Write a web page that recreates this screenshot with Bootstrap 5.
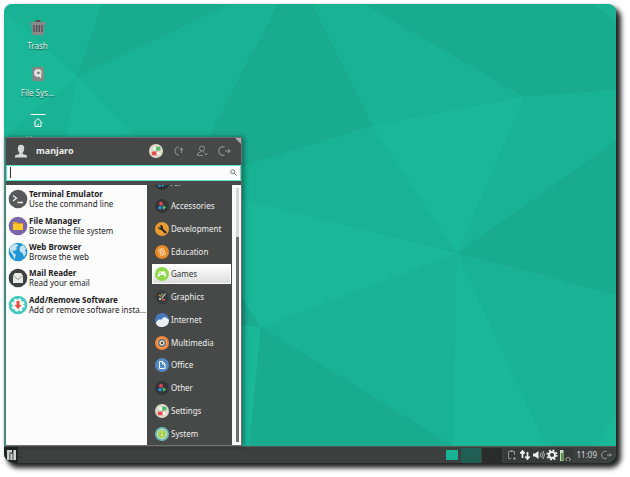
<!DOCTYPE html>
<html lang="en">
<head>
<meta charset="utf-8">
<meta name="viewport" content="width=device-width, initial-scale=1">
<title>Desktop</title>
<link href="https://cdn.jsdelivr.net/npm/bootstrap@5.3.0/dist/css/bootstrap.min.css" rel="stylesheet">
<style>
body{font-family:"Noto Sans","Open Sans",sans-serif;font-size:8px;line-height:10px;background:#fff;padding:4px 14px 14px 4px}
button{font:inherit;color:inherit;background:none;border:0;padding:0}
svg{display:block;flex:none}
.screen{border-radius:10px;box-shadow:4px 4px 5px 1px #222;background:#19b294}
.wallpaper{inset:0;width:100%;height:100%}
.shortcuts{width:67px;padding-top:15px;gap:15px}
.shortcut{height:32px;gap:6px;color:#e4efec;text-shadow:0 1px 1px #174d42}
.start-menu{left:1px;bottom:0;width:237px;height:309px;background:#464947;border:1px solid #6c716e;box-shadow:2px 0 5px #0006;color:#eee;z-index:2}
.corner{right:0;top:0;width:6px;height:6px;background:#aaa;clip-path:polygon(0 0,100% 0,100% 100%)}
.menu-head{height:28px;padding:0 9px 0 8px;font-size:9px}
.user-name{margin-left:8px}
.head-actions{gap:9px;color:#8e918f}
.search-box{height:17px;margin:0 0 4px;border:1px solid #58e8c9;background:#fcfcfc;padding:0 3px}
.search-box input{font:inherit;height:11px;border:0;border-left:1px solid #333;outline:0;background:none;min-width:0;padding:0 2px}
.favs{width:141px;background:#fcfcfc;color:#222}
.favs ul{height:133px;padding-top:1px}
.favs button{padding-left:2px;gap:1px;white-space:nowrap}
.cats ul{height:273px;padding:0 1px 0 5px}
.cats button{height:20px;padding-left:2px;gap:2px;border:1px solid transparent}
.cats button.picked{background:linear-gradient(#fff,#ddd);color:#333;border-color:#fff}
.scroll-track{width:9px;background:#f8f9f8;padding:3px 2px 3px 4px}
.scroll-rail{background:#d5d8d6}
.scroll-grip{background:#6b706d;height:205px}
.task-panel{height:17px;background:#3c403f;border-top:1px solid #555a58;border-radius:0 0 10px 10px;color:#d5d8d6}
.launcher{width:14px;background:#202423}
.handle-dots{color:#222;margin-left:1px}
.task-preview{width:12px;height:10px;background:#1ab295;margin-right:3px}
.desk-cell{width:20px;height:15px;background:#205f54;margin-right:1px}
.desk-cell.other{background:#292c2b}
.tray{height:15px;width:69px;background:#363a39;margin-left:1px;padding-left:2px;gap:1px}
.clock{margin:0 4px 0 4px}
.exit-btn{margin-right:3px;color:#999d9b}
</style>
<script src="https://cdn.jsdelivr.net/npm/bootstrap@5.3.0/dist/js/bootstrap.bundle.min.js"></script>
</head>
<body class="vh-100 d-flex">
<svg width="0" height="0" class="position-absolute" aria-hidden="true">
<defs>
<symbol id="moon-exit" viewBox="0 0 12 12"><path d="M5.500 2.500A3.700 3.700 0 1 0 5.500 9.500M6 6h4.500M8.500 4.500 10.200 6 8.500 7.500" fill="none" stroke="currentColor"/></symbol>
<symbol id="toggles" viewBox="0 0 14 14"><circle cx="7" cy="7" r="7" fill="#dfdccb"/><rect x="3.500" y="2.800" width="8" height="3.600" rx="1" fill="#4fba6b"/><rect x="3.500" y="2.800" width="3.600" height="3.600" rx="1" fill="#f4f4ef"/><rect x="2.800" y="7.600" width="8" height="3.600" rx="1" fill="#e84b4b"/><rect x="7.500" y="7.600" width="3.400" height="3.600" rx="1" fill="#f4f4ef"/></symbol>
<symbol id="blobs" viewBox="0 0 14 14"><circle cx="7" cy="7" r="7" fill="#333536"/><circle cx="6" cy="4.700" r="1.900" fill="#e4455a"/><circle cx="5" cy="8.800" r="1.800" fill="#2f8fe0"/><path d="m7.500 6 3.800 2.400-3.300 2.400z" fill="#3fc474"/></symbol>
</defs>
</svg>
<main class="screen flex-grow-1 d-flex flex-column overflow-visible">
  <section class="flex-grow-1 position-relative">
    <svg class="wallpaper position-absolute rounded-top-3" viewBox="4 4 612 443" preserveAspectRatio="none" aria-hidden="true">
      <path fill="#19b294" d="M4 4h612v443H4z"/>
      <g fill="#1ab899"><path d="M4 10 77 77 4 135z"/><path d="M77 77 66 140 20 400 243 300V201L136 138z"/><path d="M372 126 524 97 457 254z"/><path d="M457 254 236 199V338L261 328z"/><path d="M457 254 453 447H546z"/><path d="M616 412 597 447h19z"/><path d="M261 328 249 447H236V340z"/></g>
      <g fill="#19ab8e"><path d="M102 4H230L77 77z"/><path d="M278 4h34l60 122-129 40-60 20z"/><path d="M364 4H593L616 22V90L524 97z"/><path d="M457 254 616 141V295z"/><path d="M261 328 453 447H249z"/><path d="M261 328 236 290V325z"/></g>
    </svg>
    <div class="shortcuts position-relative d-flex flex-column">
      <button class="shortcut d-flex flex-column align-items-center">
        <svg width="16" height="16" viewBox="0 0 16 16"><path d="M5.500 1h5v2h-5z" fill="#555"/><path d="M.5 3h15v2.500h-1L13.700 16H2.300L1.500 5.500h-1z" fill="#8a8a8a"/><path d="M4 6v7M6.700 6v7M9.300 6v7M12 6v7" stroke="#4d4d4d" stroke-width="1.300"/></svg>
        <span>Trash</span></button>
      <button class="shortcut d-flex flex-column align-items-center">
        <svg width="16" height="16" viewBox="0 0 16 16"><rect x="2.500" y="1" width="11.500" height="14" rx="1" fill="#858585"/><circle cx="8" cy="7" r="4" fill="#dedede"/><circle cx="8.500" cy="7" r="1.300" fill="#777"/><path d="m9 8 2 4" stroke="#fff"/><path d="M12 2v11" stroke="#83a66c"/></svg>
        <span>File Sys…</span></button>
      <button class="shortcut d-flex flex-column align-items-center">
        <svg width="16" height="16" viewBox="0 0 16 16"><path d="M.5 1.500h15M4 9.500 8 5.500l4 4M5 9v4.500h6V9M8 13.500V11" fill="none" stroke="#fff"/></svg>
        <span>Home</span></button>
    </div>
    <aside class="start-menu position-absolute d-flex flex-column">
      <div class="corner position-absolute"></div>
      <header class="menu-head d-flex align-items-center">
        <svg width="14" height="14" viewBox="0 0 14 14" fill="#d8d8d8"><path d="M7 .8c2.500 0 3.400 1.700 3.200 4C10 7 9.200 8 8.700 8.700v1.200l4 1.400.5 2.200H.8l.5-2.200 4-1.400V8.700C4.800 8 4 7 3.800 4.800 3.600 2.500 4.500.8 7 .8"/></svg>
        <strong class="user-name">manjaro</strong>
        <div class="head-actions d-flex align-items-center ms-auto">
          <button aria-label="Settings manager"><svg width="14" height="14"><use href="#toggles"/></svg></button>
          <button aria-label="Lock screen"><svg width="14" height="14" viewBox="0 0 14 14"><path d="M7 3A4 4 0 1 0 7 11M9.500 9V4.500M8 6l1.500-1.800L11 6" fill="none" stroke="currentColor" stroke-width="1.100"/></svg></button>
          <button aria-label="Switch user"><svg width="14" height="14" viewBox="0 0 14 14" fill="none" stroke="currentColor"><circle cx="7" cy="4.500" r="2.500"/><path d="M6 6.500 5.500 8 2.500 9.500V11.500H8M8 7l1 1.500"/><path d="m9 9.500 2 2 2-2z" fill="currentColor" stroke="none"/></svg></button>
          <button aria-label="Log out"><svg width="14" height="14"><use href="#moon-exit"/></svg></button>
        </div>
      </header>
      <label class="search-box d-flex align-items-center">
        <input type="text" class="flex-grow-1" aria-label="Search applications">
        <svg width="7" height="7" viewBox="0 0 7 7" fill="none" stroke="#777"><circle cx="2.700" cy="2.700" r="2"/><path d="m4.200 4.200 2.500 2.500"/></svg>
      </label>
      <div class="flex-grow-1 d-flex overflow-hidden">
        <nav class="favs" aria-label="Favorites">
          <ul class="list-unstyled m-0 d-flex flex-column">
            <li class="flex-fill d-flex"><button class="d-flex align-items-center text-start">
              <svg width="20" height="20" viewBox="0 0 20 20"><circle cx="10" cy="10" r="9.300" fill="#56585a"/><path d="m5 6.500 3.500 2.700L5 12M9.500 13.500H15" fill="none" stroke="#eee" stroke-width="1.300"/></svg>
              <span><b>Terminal Emulator</b><br>Use the command line</span></button></li>
            <li class="flex-fill d-flex"><button class="d-flex align-items-center text-start">
              <svg width="20" height="20" viewBox="0 0 20 20"><circle cx="10" cy="10" r="9.300" fill="#7a66a8"/><path d="M5 6h4l1 1.200h5V14H5z" fill="#f0a519"/><path d="M5 8h10v6H5z" fill="#ffc727"/></svg>
              <span><b>File Manager</b><br>Browse the file system</span></button></li>
            <li class="flex-fill d-flex"><button class="d-flex align-items-center text-start">
              <svg width="20" height="20" viewBox="0 0 20 20"><circle cx="10" cy="10" r="9.300" fill="#2196d3"/><path d="M2 6 5 2.500 9 2l1 2-2 1.500L9 7 6.500 9 4 8.500l2 3 2 1-1.500 5-1.500-4-3-4zM12 5l3-2 3.500 4-1.500 1 1 3-2 4-1.500-4L12 9.500l-.5-2.500z" fill="#c6e5f2"/></svg>
              <span><b>Web Browser</b><br>Browse the web</span></button></li>
            <li class="flex-fill d-flex"><button class="d-flex align-items-center text-start">
              <svg width="20" height="20" viewBox="0 0 20 20"><circle cx="10" cy="10" r="9.300" fill="#3e4141"/><path d="M5 7.500 7 5h6l2 2.500V15H5z" fill="#e9e9e4"/><path d="m5 7.500 5 4 5-4" fill="none" stroke="#999"/></svg>
              <span><b>Mail Reader</b><br>Read your email</span></button></li>
            <li class="flex-fill d-flex"><button class="d-flex align-items-center text-start">
              <svg width="20" height="20" viewBox="0 0 20 20"><circle cx="10" cy="10" r="9.300" fill="#42c9bd"/><circle cx="10" cy="10" r="5.500" fill="#f5f5ef"/><circle cx="10" cy="10" r="5.800" fill="none" stroke="#f5f5ef" stroke-width="2" stroke-dasharray="2.500 2.050"/><path d="M8.500 6h3v4H13.500L10 14 6.500 10h2z" fill="#eb4b40"/></svg>
              <span><b>Add/Remove Software</b><br>Add or remove software insta…</span></button></li>
          </ul>
        </nav>
        <nav class="cats flex-grow-1 d-flex flex-column justify-content-end overflow-hidden" aria-label="Categories">
          <ul class="list-unstyled m-0 d-flex flex-column flex-shrink-0">
            <li class="flex-fill d-flex align-items-center"><button class="d-flex align-items-center w-100"><svg width="14" height="14" viewBox="0 0 14 14"><circle cx="7" cy="7" r="7" fill="#2d2f30"/><path d="M3 8h3v3H3z" fill="#2685b4"/><path d="M7 8h4L7 11z" fill="#23b8ed"/></svg>All</button></li>
            <li class="flex-fill d-flex align-items-center"><button class="d-flex align-items-center w-100"><svg width="14" height="14"><use href="#blobs"/></svg>Accessories</button></li>
            <li class="flex-fill d-flex align-items-center"><button class="d-flex align-items-center w-100"><svg width="14" height="14" viewBox="0 0 14 14"><circle cx="7" cy="7" r="7" fill="#eb9c30"/><path d="m6 6 5 5" stroke="#292a2a" stroke-width="2.200"/><path d="M3 4.500 4.800 6 6 4.800 4.500 3c3-.5 4.500 2 3 4.300-2 1.200-4.500 0-4.500-2.800" fill="#292a2a"/></svg>Development</button></li>
            <li class="flex-fill d-flex align-items-center"><button class="d-flex align-items-center w-100"><svg width="14" height="14" viewBox="0 0 14 14"><circle cx="7" cy="7" r="7" fill="#e58a26"/><g fill="none" stroke="#f8d4a5" stroke-width=".8"><circle cx="7" cy="7" r="1.300"/><ellipse cx="7" cy="7" rx="4.200" ry="1.800" transform="rotate(35 7 7)"/><ellipse cx="7" cy="7" rx="4.200" ry="1.800" transform="rotate(100 7 7)"/></g></svg>Education</button></li>
            <li class="flex-fill d-flex align-items-center"><button class="picked d-flex align-items-center w-100" aria-current="true"><svg width="14" height="14" viewBox="0 0 14 14"><circle cx="7" cy="7" r="7" fill="#8fd84c"/><path d="M4 4.500h6l1.500 5.300-1.800-.5L8.500 8h-3L4.300 9.300l-1.800.5z" fill="#fff"/><path d="M4 6.300h2M5 5.300v2M8.500 6.300h1" stroke="#8fd84c" stroke-width=".8"/></svg>Games</button></li>
            <li class="flex-fill d-flex align-items-center"><button class="d-flex align-items-center w-100"><svg width="14" height="14" viewBox="0 0 14 14"><circle cx="7" cy="7" r="7" fill="#3a3c3c"/><path d="m4 5 2 1.500" stroke="#db8d4d" stroke-width="1.500"/><path d="m10.500 3.500-4 5" stroke="#d5d0bd" stroke-width="1.200"/><path d="M4 8h2v2H4z" fill="#bbb"/><path d="M7 9h3v1.500H7z" fill="#da5d4e"/><circle cx="7" cy="4.500" r="1" fill="#79b05f"/></svg>Graphics</button></li>
            <li class="flex-fill d-flex align-items-center"><button class="d-flex align-items-center w-100"><svg width="14" height="14" viewBox="0 0 14 14"><circle cx="7" cy="7" r="7" fill="#4679b9"/><path d="M.7 10A7 7 0 0 0 14 7L12 5 9 4 6.500 6.500 3.500 6.500z" fill="#edf0f2"/></svg>Internet</button></li>
            <li class="flex-fill d-flex align-items-center"><button class="d-flex align-items-center w-100"><svg width="14" height="14" viewBox="0 0 14 14"><circle cx="7" cy="7" r="7" fill="#f58235"/><circle cx="7" cy="7" r="4.600" fill="#f3d4af"/><circle cx="7" cy="7" r="3.300" fill="none" stroke="#44576a" stroke-width="1.200"/><circle cx="7" cy="7" r="1.200" fill="#394c62"/></svg>Multimedia</button></li>
            <li class="flex-fill d-flex align-items-center"><button class="d-flex align-items-center w-100"><svg width="14" height="14" viewBox="0 0 14 14"><circle cx="7" cy="7" r="7" fill="#5089c3"/><path d="M4.500 3.500h3l2.500 2.500v4.500H4.500zM7.500 3.500V6H10" fill="none" stroke="#fff"/></svg>Office</button></li>
            <li class="flex-fill d-flex align-items-center"><button class="d-flex align-items-center w-100"><svg width="14" height="14"><use href="#blobs"/></svg>Other</button></li>
            <li class="flex-fill d-flex align-items-center"><button class="d-flex align-items-center w-100"><svg width="14" height="14"><use href="#toggles"/></svg>Settings</button></li>
            <li class="flex-fill d-flex align-items-center"><button class="d-flex align-items-center w-100"><svg width="14" height="14" viewBox="0 0 14 14"><circle cx="7" cy="7" r="7" fill="#6dbcb8"/><circle cx="7" cy="7" r="4.500" fill="#a4cf4e" stroke="#dce9bd"/><path d="M7 6.500v3M7 4.300v1.100" stroke="#eef6d8" stroke-width="1.100"/></svg>System</button></li>
          </ul>
        </nav>
        <div class="scroll-track d-flex"><div class="scroll-rail flex-grow-1 d-flex align-items-end"><div class="scroll-grip w-100"></div></div></div>
      </div>
    </aside>
  </section>
  <footer class="task-panel d-flex align-items-center overflow-hidden">
    <button class="launcher h-100 d-flex align-items-center justify-content-center" aria-label="Applications menu"><svg width="9" height="10" viewBox="0 0 9 10" fill="#d0d2d1"><path d="M0 0h5v2.500H2.500V10H0zM3.300 3.500H5.500V10H3.300zM6.300 0H9v10H6.300z"/></svg></button>
    <span class="handle-dots" aria-hidden="true">:</span>
    <div class="task-preview ms-auto"></div>
    <button class="desk-cell" aria-label="Workspace 1"></button>
    <button class="desk-cell other" aria-label="Workspace 2"></button>
    <div class="tray d-flex align-items-center">
      <svg width="12" height="12" viewBox="0 0 12 12" fill="none" stroke="#8f9391"><path d="M5 9.500H2.500v-7h6V6M4.500 1.500h2"/><path d="M7 9.500h3M8.500 8v3"/></svg>
      <svg width="12" height="12" viewBox="0 0 12 12" fill="none" stroke="#eee" stroke-width="1.700"><path d="M3.500 9V2.500M1.300 4.500 3.500 2l2.200 2.500M8.500 3v6.500M6.300 7.500 8.500 10l2.200-2.500"/></svg>
      <svg width="13" height="12" viewBox="0 0 13 12"><path d="M1 4.500h2L6.500 2v8L3 7.500H1z" fill="#eee"/><path d="M8 4q1.200 2 0 4M9.700 3q2 3 0 6M11.200 2q2.500 4 0 8" fill="none" stroke="#ccc" stroke-width=".8"/></svg>
      <svg width="12" height="12" viewBox="0 0 12 12" fill="none" stroke="#eee"><circle cx="6" cy="6" r="3" stroke-width="2"/><circle cx="6" cy="6" r="4.700" stroke-width="1.800" stroke-dasharray="1.850 1.840"/></svg>
      <svg width="12" height="13" viewBox="0 0 12 13"><path d="M1 1h3.500v11H1z" fill="#ced8c7"/><path d="M2 4h2v7.500H2z" fill="#4d9b30"/><path d="M6.500 11a2.500 2.500 0 0 1 5 0M7.500 11v1M10.500 11v1" fill="none" stroke="#aaa" stroke-width=".9"/></svg>
    </div>
    <time class="clock">11:09</time>
    <button class="exit-btn" aria-label="Log out"><svg width="12" height="12"><use href="#moon-exit"/></svg></button>
  </footer>
</main>
</body>
</html>
